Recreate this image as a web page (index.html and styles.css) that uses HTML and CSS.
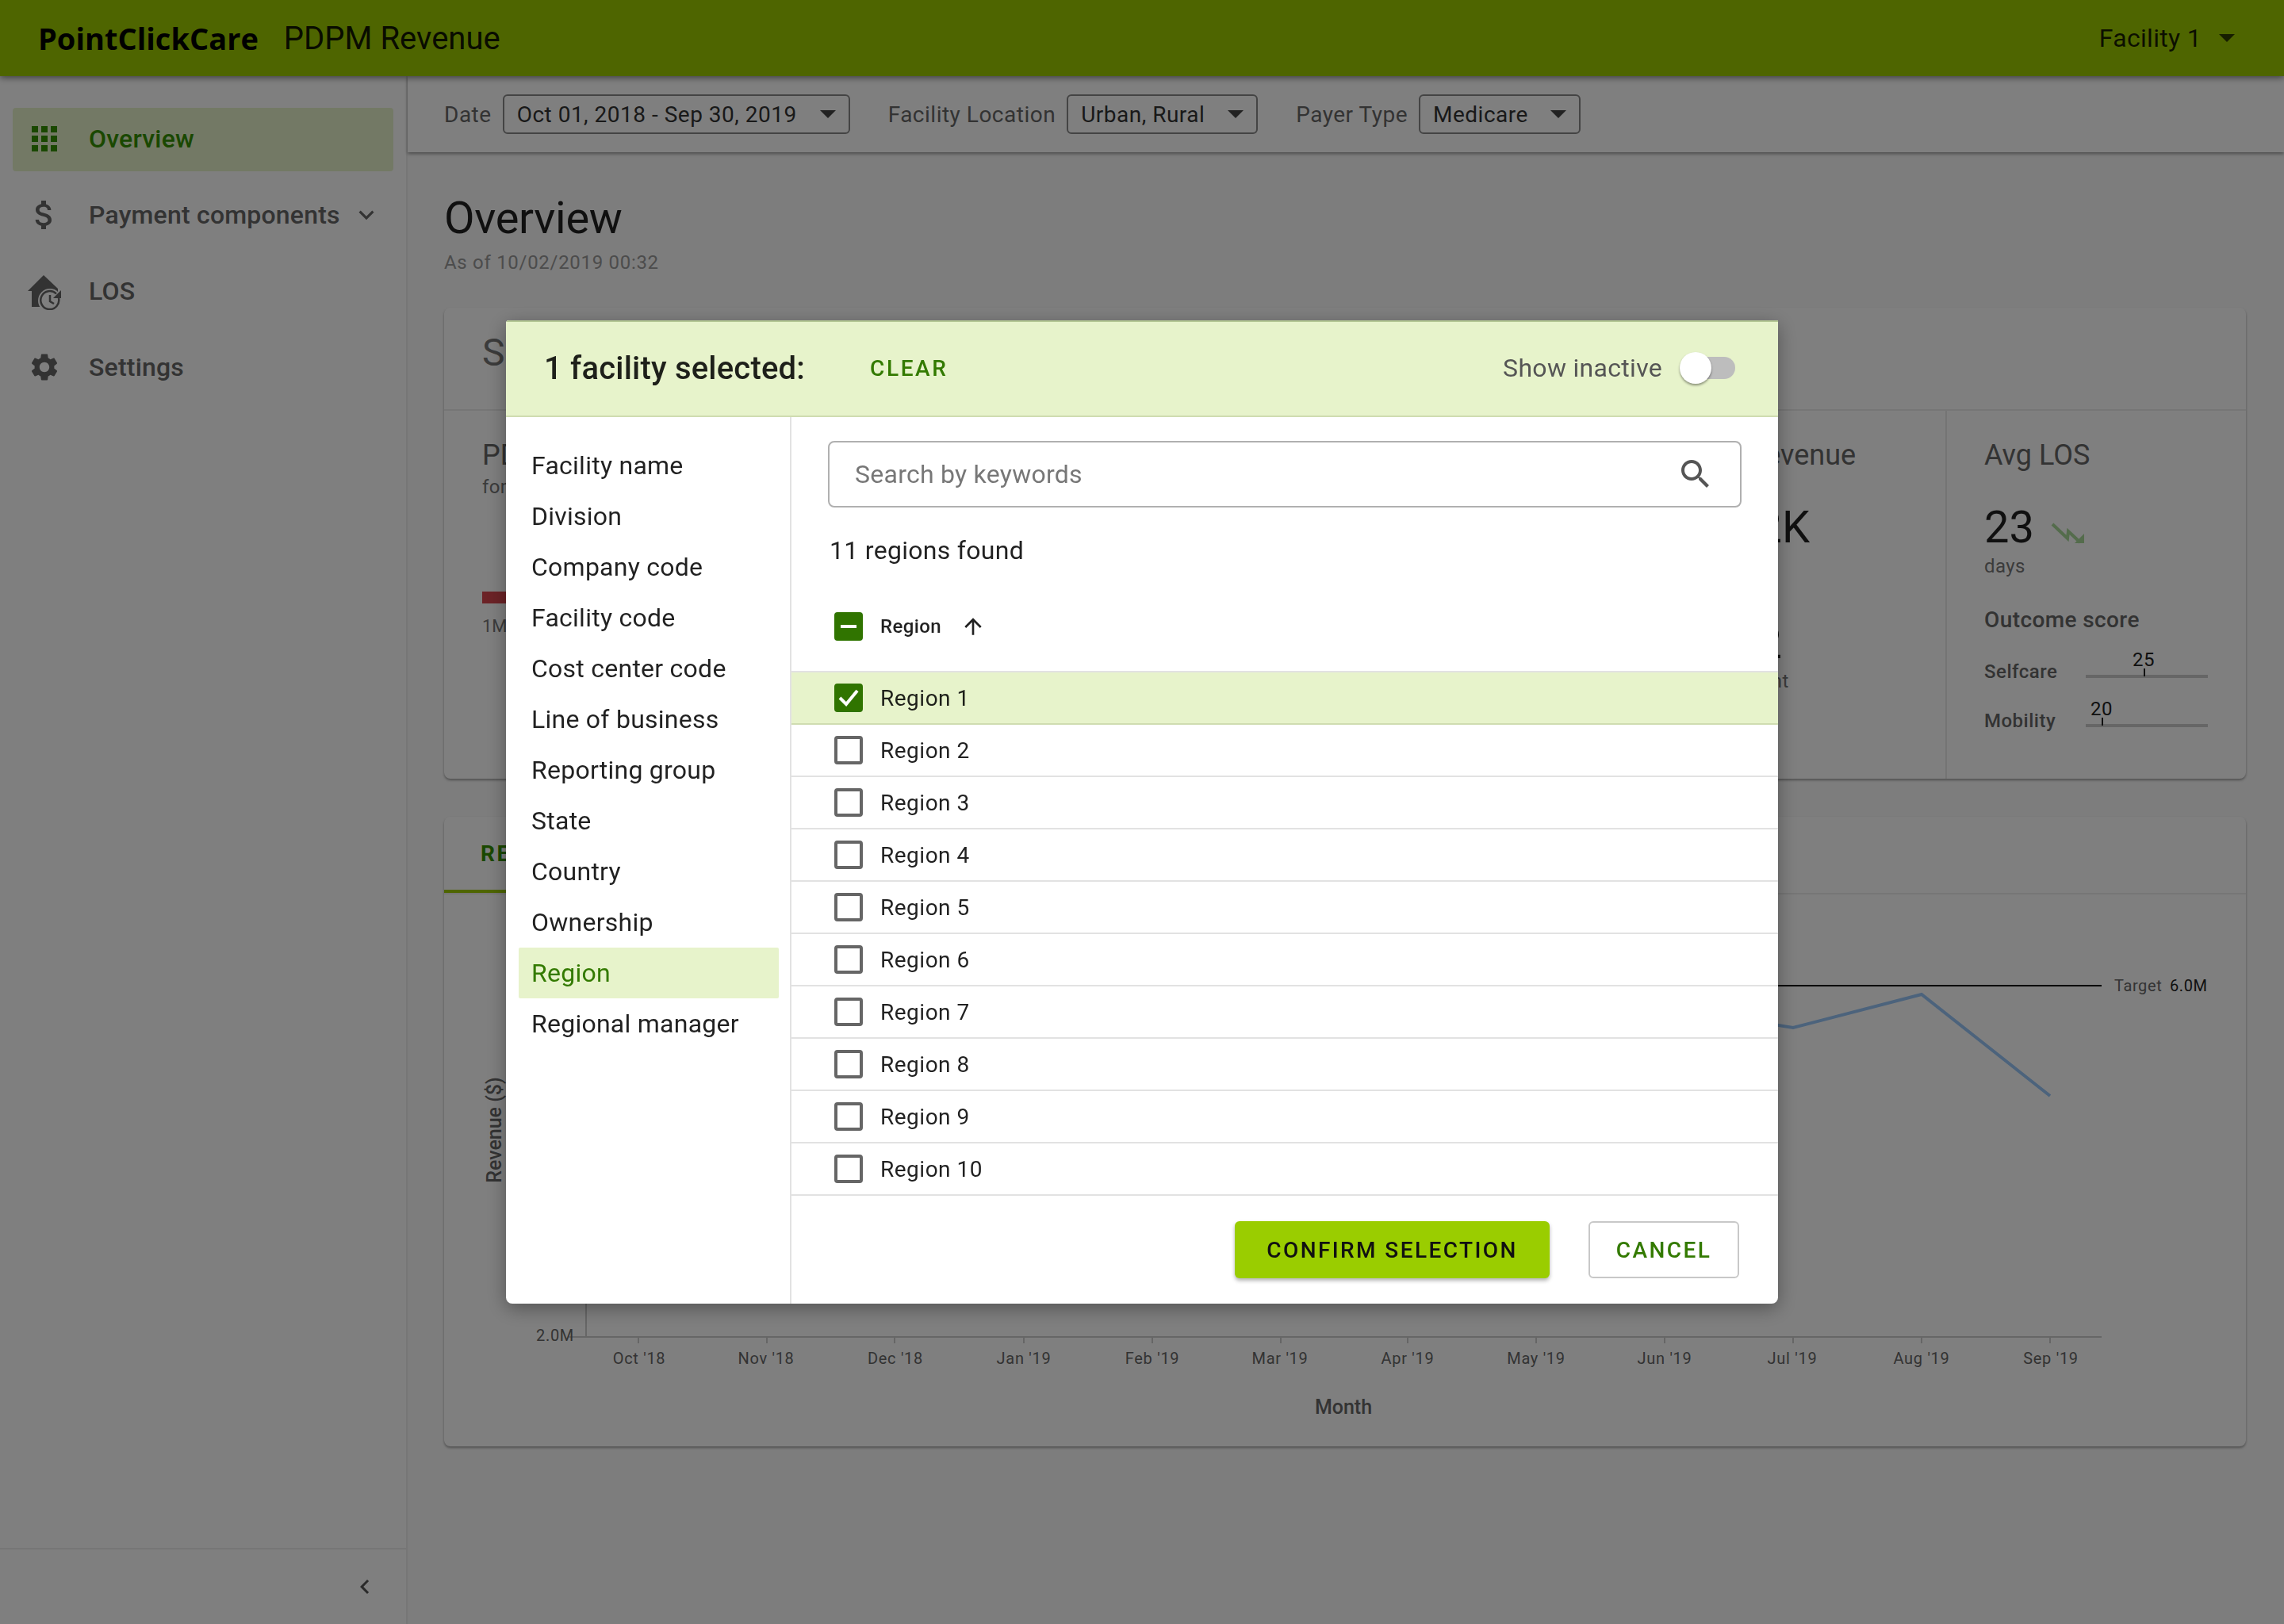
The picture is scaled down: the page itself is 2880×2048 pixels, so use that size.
FILE: index.html
```html
<!DOCTYPE html>
<html lang="en">
<head>
  <meta charset="UTF-8">
  <title>PDPM Revenue</title>
  <link rel="stylesheet" href="styles.css">
</head>
<body>
  <header class="topbar">
    <div class="logo">PointClickCare</div>
    <div class="app-name">PDPM Revenue</div>
    <div class="facility-menu">Facility 1<span class="caret caret-dark"></span></div>
  </header>

  <div class="app-body">
    <aside class="sidebar">
      <nav class="nav">
        <a class="nav-item active">
          <svg class="nav-icon" viewBox="0 0 24 24"><path d="M4 8h4V4H4v4zm6 12h4v-4h-4v4zm-6 0h4v-4H4v4zm0-6h4v-4H4v4zm6 0h4v-4h-4v4zm6-10v4h4V4h-4zm-6 4h4V4h-4v4zm6 6h4v-4h-4v4zm0 6h4v-4h-4v4z"/></svg>
          Overview
        </a>
        <a class="nav-item">
          <svg class="nav-icon" viewBox="0 0 24 24"><path d="M11.8 10.9c-2.27-.59-3-1.2-3-2.15 0-1.09 1.01-1.85 2.7-1.85 1.78 0 2.44.85 2.5 2.1h2.21c-.07-1.72-1.12-3.3-3.21-3.81V3h-3v2.16c-1.94.42-3.5 1.68-3.5 3.61 0 2.31 1.91 3.46 4.7 4.13 2.5.6 3 1.48 3 2.41 0 .69-.49 1.79-2.7 1.79-2.06 0-2.87-.92-2.98-2.1h-2.2c.12 2.19 1.76 3.42 3.68 3.83V21h3v-2.15c1.95-.37 3.5-1.5 3.5-3.55 0-2.84-2.43-3.81-4.7-4.4z"/></svg>
          Payment components
          <svg class="nav-chevron" viewBox="0 0 24 24"><path d="M16.59 8.59L12 13.17 7.41 8.59 6 10l6 6 6-6z"/></svg>
        </a>
        <a class="nav-item">
          <svg class="nav-icon" viewBox="0 0 48 48">
            <path d="M23 4L41 21 41 44 8 44 8 24 3 24z"/>
            <circle cx="31" cy="36" r="15" fill="#fff"/>
            <path class="los-clock" d="M42 33a11.500 11.500 0 1 1-3-5.500M31 29v8l5 3"/>
            <path d="M45 23v10h-10z"/>
          </svg>
          LOS
        </a>
        <a class="nav-item">
          <svg class="nav-icon icon-gear" viewBox="0 0 24 24"><path d="M19.14 12.94c.04-.3.06-.61.06-.94 0-.32-.02-.64-.07-.94l2.03-1.58c.18-.14.23-.41.12-.61l-1.92-3.32c-.12-.22-.37-.29-.59-.22l-2.39.96c-.5-.38-1.03-.7-1.62-.94l-.36-2.54c-.04-.24-.24-.41-.48-.41h-3.84c-.24 0-.43.17-.47.41l-.36 2.54c-.59.24-1.13.57-1.62.94l-2.39-.96c-.22-.08-.47 0-.59.22L2.74 8.87c-.12.21-.08.47.12.61l2.03 1.58c-.05.3-.09.63-.09.94s.02.64.07.94l-2.03 1.58c-.18.14-.23.41-.12.61l1.92 3.32c.12.22.37.29.59.22l2.39-.96c.5.38 1.03.7 1.62.94l.36 2.54c.05.24.24.41.48.41h3.84c.24 0 .44-.17.47-.41l.36-2.54c.59-.24 1.13-.56 1.62-.94l2.39.96c.22.08.47 0 .59-.22l1.92-3.32c.12-.22.07-.47-.12-.61l-2.01-1.58zM12 15.6c-1.98 0-3.6-1.62-3.6-3.6s1.62-3.6 3.6-3.6 3.6 1.62 3.6 3.6-1.62 3.6-3.6 3.6z"/></svg>
          Settings
        </a>
      </nav>
      <div class="sidebar-footer">
        <svg class="collapse-icon" viewBox="0 0 24 24"><path d="M15.41 7.41L14 6l-6 6 6 6 1.41-1.41L10.83 12z"/></svg>
      </div>
    </aside>

    <main class="main">
      <div class="filter-bar">
        <span class="filter-label">Date</span>
        <div class="filter-select select-date">Oct 01, 2018 - Sep 30, 2019<span class="caret"></span></div>
        <span class="filter-label label-gap">Facility Location</span>
        <div class="filter-select select-location">Urban, Rural<span class="caret"></span></div>
        <span class="filter-label label-gap">Payer Type</span>
        <div class="filter-select select-payer">Medicare<span class="caret"></span></div>
      </div>

      <div class="content">
        <h1 class="page-title">Overview</h1>
        <div class="as-of">As of 10/02/2019 00:32</div>

        <section class="card summary-card">
          <div class="summary-head">Summary</div>
          <div class="summary-stats">
            <div class="stat stat-first">
              <div class="stat-title">PDPM Revenue</div>
              <div class="stat-small">for period</div>
              <div class="stat-bar"></div>
              <div class="stat-axis">1M</div>
            </div>
            <div class="stat stat-revenue">
              <div class="stat-title">Avg Revenue</div>
              <div class="stat-value">$192K</div>
              <div class="stat-value stat-value-second">$102</div>
              <div class="stat-small">per patient</div>
            </div>
            <div class="stat stat-los">
              <div class="stat-title">Avg LOS</div>
              <div class="stat-value">23
                <svg class="trend-icon" viewBox="0 0 44 30"><path d="M2 4l19 18 1-9 15 14"/><path class="trend-head" d="M30 28h12V16z"/></svg>
              </div>
              <div class="stat-small">days</div>
              <div class="outcome-title">Outcome score</div>
              <div class="score-row">
                <span class="score-label">Selfcare</span>
                <div class="score-track">
                  <span class="score-mark" style="left: 73px"><span class="score-num">25</span></span>
                </div>
              </div>
              <div class="score-row score-row-second">
                <span class="score-label">Mobility</span>
                <div class="score-track">
                  <span class="score-mark" style="left: 20px"><span class="score-num">20</span></span>
                </div>
              </div>
            </div>
          </div>
        </section>

        <section class="card chart-card">
          <div class="tabs">
            <div class="tab active-tab">REVENUE</div>
          </div>
          <svg class="chart" viewBox="560 1128 2272 696">
            <g class="chart-axis">
              <path d="M739 1686V1500M717 1686H2650"/>
              <path d="M805 1686v8M967 1686v8M1128 1686v8M1291 1686v8M1453 1686v8M1615 1686v8M1775 1686v8M1937 1686v8M2099 1686v8M2261 1686v8M2423 1686v8M2585 1686v8"/>
            </g>
            <path class="chart-target" d="M2100 1243H2650"/>
            <path class="chart-line" d="M2100 1270L2261 1296 2423 1254 2585 1382"/>
            <g class="chart-ticks">
              <text x="806" y="1720">Oct '18</text>
              <text x="966" y="1720">Nov '18</text>
              <text x="1129" y="1720">Dec '18</text>
              <text x="1291" y="1720">Jan '19</text>
              <text x="1453" y="1720">Feb '19</text>
              <text x="1614" y="1720">Mar '19</text>
              <text x="1775" y="1720">Apr '19</text>
              <text x="1937" y="1720">May '19</text>
              <text x="2099" y="1720">Jun '19</text>
              <text x="2260" y="1720">Jul '19</text>
              <text x="2423" y="1720">Aug '19</text>
              <text x="2586" y="1720">Sep '19</text>
            </g>
            <text class="chart-y-tick" x="700" y="1691">2.0M</text>
            <text class="chart-target-label" x="2666" y="1250">Target</text>
            <text class="chart-target-value" x="2736" y="1250">6.0M</text>
            <text class="chart-title" x="1694" y="1783">Month</text>
            <text class="chart-title" transform="translate(632 1425) rotate(-90)">Revenue ($)</text>
          </svg>
        </section>
      </div>
    </main>
  </div>

  <div class="scrim">
    <div class="modal">
      <div class="modal-head">
        <div class="selected-count">1 facility selected:</div>
        <button class="clear-btn">CLEAR</button>
        <div class="inactive-toggle">
          Show inactive
          <span class="toggle"><span class="toggle-thumb"></span></span>
        </div>
      </div>

      <div class="modal-body">
        <ul class="field-list">
          <li>Facility name</li>
          <li>Division</li>
          <li>Company code</li>
          <li>Facility code</li>
          <li>Cost center code</li>
          <li>Line of business</li>
          <li>Reporting group</li>
          <li>State</li>
          <li>Country</li>
          <li>Ownership</li>
          <li class="active">Region</li>
          <li>Regional manager</li>
        </ul>

        <div class="picker">
          <div class="picker-top">
            <div class="search-box">
              <span class="search-text">Search by keywords</span>
              <svg class="search-icon" viewBox="0 0 24 24"><path d="M15.5 14h-.79l-.28-.27C15.41 12.59 16 11.11 16 9.5 16 5.91 13.09 3 9.5 3S3 5.91 3 9.5 5.91 16 9.5 16c1.61 0 3.09-.59 4.23-1.57l.27.28v.79l5 4.99L20.49 19l-4.99-5zm-6 0C7.01 14 5 11.99 5 9.5S7.01 5 9.5 5 14 7.01 14 9.5 11.99 14 9.5 14z"/></svg>
            </div>
            <div class="found">11 regions found</div>
          </div>

          <div class="region-head">
            <span class="check check-partial"></span>
            <span class="region-head-label">Region</span>
            <svg class="sort-icon" viewBox="0 0 24 24"><path d="M4 12l1.41 1.41L11 7.83V20h2V7.83l5.58 5.59L20 12l-8-8-8 8z"/></svg>
          </div>

          <div class="region-row selected">
            <span class="check check-on">
              <svg viewBox="0 0 36 36"><path d="M7 18l8 8 14-17"/></svg>
            </span>
            Region 1
          </div>
          <div class="region-row"><span class="check"></span>Region 2</div>
          <div class="region-row"><span class="check"></span>Region 3</div>
          <div class="region-row"><span class="check"></span>Region 4</div>
          <div class="region-row"><span class="check"></span>Region 5</div>
          <div class="region-row"><span class="check"></span>Region 6</div>
          <div class="region-row"><span class="check"></span>Region 7</div>
          <div class="region-row"><span class="check"></span>Region 8</div>
          <div class="region-row"><span class="check"></span>Region 9</div>
          <div class="region-row"><span class="check"></span>Region 10</div>

          <div class="modal-actions">
            <button class="btn btn-confirm">CONFIRM SELECTION</button>
            <button class="btn btn-cancel">CANCEL</button>
          </div>
        </div>
      </div>
    </div>
  </div>
</body>
</html>
```

FILE: styles.css
```css
* {
  box-sizing: border-box;
}
body {
  margin: 0;
  width: 2880px;
  height: 2048px;
  overflow: hidden;
  background: #fafafa;
  font-family: Roboto, "Liberation Sans", sans-serif;
  color: #222;
}

/* top bar */
.topbar {
  position: relative;
  z-index: 2;
  display: flex;
  align-items: center;
  height: 96px;
  padding: 0 62px 0 48px;
  background: #9ccb00;
  box-shadow: 0 2px 8px rgba(0, 0, 0, 0.5);
}
.logo {
  font-family: "Open Sans", sans-serif;
  font-size: 38px;
  font-weight: 700;
  color: #000;
}
.app-name {
  margin-left: 32px;
  font-size: 40px;
  color: rgba(0, 0, 0, 0.9);
}
.facility-menu {
  display: flex;
  align-items: center;
  margin-left: auto;
  font-size: 32px;
  letter-spacing: 0.3px;
  color: rgba(0, 0, 0, 0.85);
}
.caret {
  width: 0;
  height: 0;
  border-left: 10px solid transparent;
  border-right: 10px solid transparent;
  border-top: 10px solid #444;
}
.caret-dark {
  margin-left: 22px;
  border-top-color: rgba(0, 0, 0, 0.7);
}

.app-body {
  display: flex;
  height: 1952px;
}

/* sidebar */
.sidebar {
  display: flex;
  flex-direction: column;
  flex: none;
  width: 514px;
  background: #fff;
  border-right: 2px solid #ededed;
}
.nav {
  flex: 1;
  padding: 40px 16px 0;
}
.nav-item {
  display: flex;
  align-items: center;
  height: 80px;
  margin-bottom: 16px;
  padding: 0 0 2px 16px;
  border-radius: 4px;
  font-size: 32px;
  font-weight: 500;
  letter-spacing: 0.2px;
  white-space: nowrap;
  color: #666;
}
.nav-item.active {
  background: #e7f3cb;
  color: #349000;
}
.nav-icon {
  flex: none;
  width: 48px;
  height: 48px;
  margin-right: 32px;
  fill: #666;
}
.nav-item.active .nav-icon {
  fill: #349000;
}
.icon-gear {
  transform: scale(0.86);
}
.los-clock {
  fill: none;
  stroke: #666;
  stroke-width: 2.5;
}
.nav-chevron {
  width: 38px;
  height: 38px;
  margin-left: 14px;
  fill: #666;
}
.sidebar-footer {
  display: flex;
  align-items: center;
  justify-content: flex-end;
  height: 96px;
  padding-right: 34px;
  border-top: 2px solid #ededed;
}
.collapse-icon {
  width: 36px;
  height: 36px;
  fill: #555;
}

/* filters */
.main {
  flex: 1;
  min-width: 0;
}
.filter-bar {
  display: flex;
  align-items: center;
  height: 96px;
  padding: 0 46px;
  background: #fff;
  box-shadow: 0 2px 4px rgba(0, 0, 0, 0.4);
}
.filter-label {
  margin-right: 14px;
  font-size: 28px;
  letter-spacing: 0.5px;
  color: #666;
}
.label-gap {
  margin-left: 48px;
}
.filter-select {
  display: flex;
  align-items: center;
  justify-content: space-between;
  height: 50px;
  padding: 0 16px;
  border: 2px solid #888;
  border-radius: 6px;
  font-size: 28px;
  letter-spacing: 0.5px;
  color: #333;
}
.select-date {
  width: 438px;
}
.select-location {
  width: 241px;
}
.select-payer {
  width: 204px;
}

/* page */
.content {
  padding: 47px 48px 0 46px;
}
.page-title {
  margin: 0;
  font-size: 56px;
  font-weight: 400;
  line-height: 72px;
  letter-spacing: -0.3px;
  color: rgba(0, 0, 0, 0.87);
}
.as-of {
  margin-top: 4px;
  font-size: 24px;
  line-height: 32px;
  letter-spacing: 0.7px;
  color: #999;
}
.card {
  background: #fff;
  border-radius: 8px;
  box-shadow: 0 2px 3px rgba(0, 0, 0, 0.35);
}
.summary-card {
  height: 594px;
  margin-top: 41px;
}
.summary-head {
  height: 130px;
  padding: 28px 48px;
  border-bottom: 2px solid #ececec;
  font-size: 48px;
  color: #777;
}
.summary-stats {
  display: flex;
  height: 464px;
}
.stat {
  padding-top: 32px;
}
.stat-title {
  font-size: 36px;
  line-height: 48px;
  color: #666;
}
.stat-small {
  font-size: 24px;
  line-height: 32px;
  letter-spacing: 0.4px;
  color: #777;
}
.stat-first {
  flex: 1;
  padding-left: 48px;
}
.stat-bar {
  width: 300px;
  height: 15px;
  margin-top: 116px;
  background: #d8464e;
}
.stat-axis {
  margin-top: 16px;
  font-size: 22px;
  color: #777;
}
.stat-revenue {
  width: 332px;
}
.stat-revenue .stat-title {
  margin-left: 14px;
}
.stat-revenue .stat-small {
  margin-left: 16px;
}
.stat-value {
  display: flex;
  align-items: center;
  margin-top: 35px;
  font-size: 56px;
  line-height: 64px;
  color: rgba(0, 0, 0, 0.87);
}
.stat-value-second {
  margin-top: 82px;
}
.stat-los {
  width: 379px;
  padding-left: 47px;
  border-left: 2px solid #e8e8e8;
}
.stat-los .stat-small {
  margin-top: 1px;
}
.trend-icon {
  width: 44px;
  height: 30px;
  margin: 14px 0 0 21px;
  fill: none;
  stroke: #a8d898;
  stroke-width: 4;
}
.trend-head {
  fill: #a8d898;
  stroke: none;
}
.outcome-title {
  margin-top: 32px;
  font-size: 28px;
  font-weight: 500;
  line-height: 40px;
  letter-spacing: 0.4px;
  color: #666;
}
.score-row {
  display: flex;
  align-items: center;
  height: 32px;
  margin-top: 29px;
  font-size: 24px;
  font-weight: 500;
  letter-spacing: 0.5px;
  color: #666;
}
.score-row-second {
  margin-top: 30px;
}
.score-label {
  width: 128px;
}
.score-track {
  position: relative;
  width: 154px;
  height: 4px;
  margin-top: 12px;
  background: #ccc;
}
.score-mark {
  position: absolute;
  bottom: 2px;
  width: 2px;
  height: 10px;
  background: #222;
}
.score-num {
  position: absolute;
  bottom: 7px;
  left: -14px;
  font-size: 24px;
  font-weight: 400;
  color: #222;
}

/* chart */
.chart-card {
  height: 794px;
  margin-top: 48px;
}
.tabs {
  height: 98px;
  border-bottom: 2px solid #ececec;
}
.tab {
  display: inline-block;
  height: 96px;
  padding: 30px 46px 0;
  border-bottom: 4px solid #9ccb00;
  font-size: 28px;
  font-weight: 700;
  letter-spacing: 2.6px;
  color: #349000;
}
.chart {
  display: block;
  width: 2272px;
  height: 696px;
  font-family: Roboto, sans-serif;
}
.chart-axis path {
  fill: none;
  stroke: #ccc;
  stroke-width: 2;
}
.chart-target {
  fill: none;
  stroke: #000;
  stroke-width: 2;
}
.chart-line {
  fill: none;
  stroke: #98c6f8;
  stroke-width: 4;
}
.chart-ticks text {
  font-size: 20px;
  letter-spacing: 0.7px;
  text-anchor: middle;
  fill: #666;
}
.chart-y-tick {
  font-size: 20px;
  letter-spacing: 0.7px;
  text-anchor: middle;
  fill: #666;
}
.chart-target-label {
  font-size: 20px;
  letter-spacing: 0.6px;
  fill: #666;
}
.chart-target-value {
  font-size: 20px;
  letter-spacing: 0.6px;
  fill: #222;
}
.chart-title {
  font-size: 25px;
  font-weight: 500;
  text-anchor: middle;
  fill: #666;
}

/* modal */
.scrim {
  position: fixed;
  z-index: 5;
  top: 0;
  left: 0;
  right: 0;
  bottom: 0;
  display: flex;
  align-items: center;
  justify-content: center;
  background: rgba(0, 0, 0, 0.5);
}
.modal {
  width: 1604px;
  height: 1240px;
  overflow: hidden;
  background: #fff;
  border-radius: 4px 0 8px 8px;
  box-shadow: 0 6px 24px rgba(0, 0, 0, 0.35);
}
.modal-head {
  display: flex;
  align-items: center;
  height: 122px;
  padding: 0 54px 2px 48px;
  background: #e7f3cb;
  border-top: 2px solid #b4c794;
  border-bottom: 2px solid #cfdcb0;
}
.selected-count {
  font-size: 40px;
  font-weight: 500;
  letter-spacing: 0.2px;
  color: rgba(0, 0, 0, 0.87);
}
.clear-btn {
  margin-left: 82px;
  padding: 0;
  border: none;
  background: none;
  font-family: inherit;
  font-size: 28px;
  font-weight: 500;
  letter-spacing: 2.6px;
  color: #337a00;
}
.inactive-toggle {
  display: flex;
  align-items: center;
  margin-left: auto;
  font-size: 32px;
  letter-spacing: 0.3px;
  color: #555;
}
.toggle {
  position: relative;
  display: block;
  width: 58px;
  height: 28px;
  margin-left: 34px;
  background: #bdbdbd;
  border-radius: 14px;
}
.toggle-thumb {
  position: absolute;
  top: -6px;
  left: -12px;
  width: 40px;
  height: 40px;
  background: #fff;
  border-radius: 50%;
  box-shadow: 0 2px 3px rgba(0, 0, 0, 0.4);
}
.modal-body {
  display: flex;
  height: 1118px;
}
.field-list {
  flex: none;
  width: 360px;
  margin: 0;
  padding: 29px 14px 0 16px;
  border-right: 2px solid #e2e2e2;
  list-style: none;
}
.field-list li {
  height: 64px;
  padding-left: 16px;
  border-radius: 2px;
  font-size: 32px;
  line-height: 64px;
  letter-spacing: 0.25px;
  color: rgba(0, 0, 0, 0.87);
}
.field-list li.active {
  background: #e7f3cb;
  color: #337a00;
}
.picker {
  flex: 1;
  min-width: 0;
}
.picker-top {
  padding: 30px 46px 0 46px;
}
.search-box {
  display: flex;
  align-items: center;
  justify-content: space-between;
  height: 84px;
  padding: 0 32px 0 32px;
  border: 2px solid #b0b0b0;
  border-radius: 8px;
}
.search-text {
  font-size: 32px;
  letter-spacing: 0.25px;
  color: #777;
}
.search-icon {
  width: 48px;
  height: 48px;
  fill: #555;
}
.found {
  margin-top: 32px;
  padding-left: 2px;
  font-size: 32px;
  line-height: 44px;
  letter-spacing: 0.3px;
  color: rgba(0, 0, 0, 0.87);
}
.region-head {
  display: flex;
  align-items: center;
  height: 132px;
  padding: 18px 0 0 54px;
  border-bottom: 2px solid #e2e2e2;
}
.region-head-label {
  font-size: 24px;
  font-weight: 500;
  letter-spacing: 0.4px;
  color: rgba(0, 0, 0, 0.87);
}
.sort-icon {
  width: 32px;
  height: 32px;
  margin-left: 24px;
  fill: #222;
}
.check {
  position: relative;
  flex: none;
  width: 36px;
  height: 36px;
  margin-right: 22px;
  background: #fff;
  border: 4px solid #666;
  border-radius: 4px;
}
.check-partial,
.check-on {
  background: #307400;
  border-color: #307400;
}
.check-partial::after {
  content: "";
  position: absolute;
  top: 12px;
  left: 4px;
  width: 20px;
  height: 4px;
  background: #fff;
}
.check-on svg {
  position: absolute;
  top: -4px;
  left: -4px;
  width: 36px;
  height: 36px;
  fill: none;
  stroke: #fff;
  stroke-width: 4;
}
.region-row {
  display: flex;
  align-items: center;
  height: 66px;
  padding-left: 54px;
  border-bottom: 2px solid #e2e2e2;
  font-size: 28px;
  letter-spacing: 0.5px;
  color: rgba(0, 0, 0, 0.87);
}
.region-row.selected {
  background: #e7f3cb;
  border-bottom-color: #cfdcb0;
}
.modal-actions {
  display: flex;
  justify-content: flex-end;
  gap: 49px;
  padding: 32px 49px 0 0;
}
.btn {
  height: 72px;
  border-radius: 6px;
  font-family: inherit;
  font-size: 28px;
  font-weight: 500;
  letter-spacing: 2.4px;
}
.btn-confirm {
  width: 397px;
  border: none;
  background: #9acd00;
  color: #111;
  box-shadow: 0 3px 5px rgba(0, 0, 0, 0.3);
}
.btn-cancel {
  width: 190px;
  background: #fff;
  border: 2px solid #c8c8c8;
  color: #337a00;
}
```
